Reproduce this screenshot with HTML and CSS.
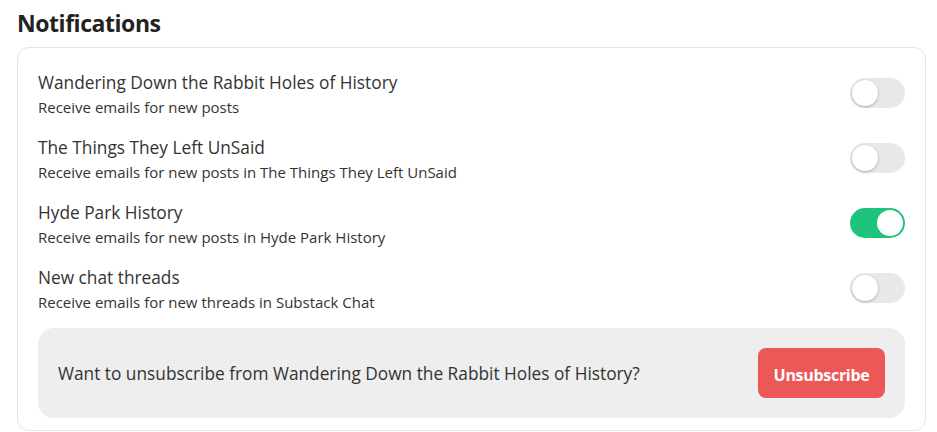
FILE: index.html
```html
<!DOCTYPE html>
<html>
<head>
<meta charset="utf-8">
<link rel="stylesheet" href="styles.css">
</head>
<body>
<h2 class="heading">Notifications</h2>
<div class="card">
  <div class="row">
    <div class="info">
      <div class="title">Wandering Down the Rabbit Holes of History</div>
      <div class="sub">Receive emails for new posts</div>
    </div>
    <span class="toggle"><span class="knob"></span></span>
  </div>
  <div class="row">
    <div class="info">
      <div class="title">The Things They Left UnSaid</div>
      <div class="sub">Receive emails for new posts in The Things They Left UnSaid</div>
    </div>
    <span class="toggle"><span class="knob"></span></span>
  </div>
  <div class="row">
    <div class="info">
      <div class="title">Hyde Park History</div>
      <div class="sub">Receive emails for new posts in Hyde Park History</div>
    </div>
    <span class="toggle on"><span class="knob"></span></span>
  </div>
  <div class="row">
    <div class="info">
      <div class="title">New chat threads</div>
      <div class="sub">Receive emails for new threads in Substack Chat</div>
    </div>
    <span class="toggle"><span class="knob"></span></span>
  </div>
  <div class="unsub">
    <span class="unsub-text">Want to unsubscribe from Wandering Down the Rabbit Holes of History?</span>
    <button class="btn">Unsubscribe</button>
  </div>
</div>
</body>
</html>
```
FILE: styles.css
```css
html, body {
  margin: 0;
  padding: 0;
  background: #ffffff;
}
body {
  font-family: "Open Sans", "Noto Sans", sans-serif;
  color: #333333;
  padding: 0 11px 0 17px;
}
.heading {
  margin: 0;
  padding-top: 6px;
  height: 47px;
  box-sizing: border-box;
  font-size: 23px;
  line-height: 34px;
  font-weight: 700;
  color: #222222;
  letter-spacing: -0.45px;
}
.card {
  border: 1px solid #e4e4e4;
  border-radius: 12px;
  padding: 12px 20px 12px 20px;
}
.row {
  display: flex;
  align-items: center;
  justify-content: space-between;
  height: 65px;
}
.info {
  display: flex;
  flex-direction: column;
  margin-top: 3px;
}
.title {
  font-size: 17.3px;
  line-height: 26px;
  color: #333333;
}
.sub {
  font-size: 15px;
  line-height: 23px;
  color: #333333;
}
.toggle {
  position: relative;
  flex: none;
  width: 55px;
  height: 30px;
  border-radius: 15px;
  background: #e8e8e8;
}
.toggle .knob {
  position: absolute;
  top: 2px;
  left: 2px;
  width: 26px;
  height: 26px;
  border-radius: 50%;
  background: #ffffff;
  box-shadow: 0 1px 3px rgba(0, 0, 0, 0.25);
}
.toggle.on {
  background: #1ec47b;
}
.toggle.on .knob {
  left: 27px;
  box-shadow: none;
}
.unsub {
  margin-top: 8px;
  height: 90px;
  border-radius: 16px;
  background: #eeeeee;
  display: flex;
  align-items: center;
  justify-content: space-between;
  padding: 0 20px;
}
.unsub-text {
  font-size: 17.3px;
  color: #333333;
}
.btn {
  width: 127px;
  height: 50px;
  border: none;
  border-radius: 8px;
  background: #ec5858;
  color: #ffffff;
  font-family: "Open Sans", "Noto Sans", sans-serif;
  font-size: 16px;
  font-weight: 700;
  letter-spacing: -0.3px;
  padding: 3px 0 0 0;
}
```
